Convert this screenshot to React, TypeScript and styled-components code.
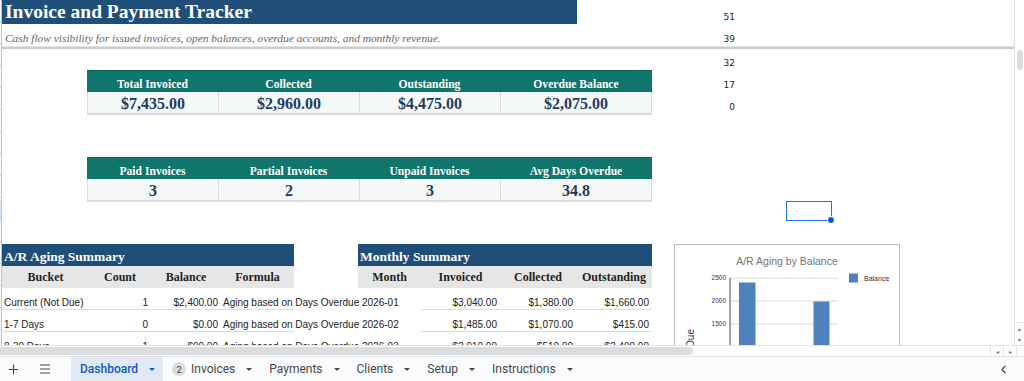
import React from "react";
import styled, { createGlobalStyle } from "styled-components";
import { Plus, Menu, ChevronLeft } from "lucide-react";

const SERIF = `"Liberation Serif", "DejaVu Serif", serif`;
const SANS = `"Liberation Sans", Arial, sans-serif`;
const UI = `Roboto, "Noto Sans", sans-serif`;

const GlobalStyle = createGlobalStyle`
  html, body {
    margin: 0;
    padding: 0;
    background: #ffffff;
  }
  body {
    width: 1024px;
    height: 381px;
    overflow: hidden;
  }
`;

const kpiTop = [
    { label: "Total Invoiced", value: "$7,435.00" },
    { label: "Collected", value: "$2,960.00" },
    { label: "Outstanding", value: "$4,475.00" },
    { label: "Overdue Balance", value: "$2,075.00" },
];

const kpiCounts = [
    { label: "Paid Invoices", value: "3" },
    { label: "Partial Invoices", value: "2" },
    { label: "Unpaid Invoices", value: "3" },
    { label: "Avg Days Overdue", value: "34.8" },
];

const aging = [
    ["Current (Not Due)", "1", "$2,400.00"],
    ["1-7 Days", "0", "$0.00"],
    ["8-30 Days", "1", "$90.00"],
];

const monthly = [
    ["2026-01", "$3,040.00", "$1,380.00", "$1,660.00"],
    ["2026-02", "$1,485.00", "$1,070.00", "$415.00"],
    ["2026-03", "$2,910.00", "$510.00", "$2,400.00"],
];

const helperNumbers = ["32", "17", "0"];

const tabs = [
    { name: "Dashboard", active: true },
    { name: "Invoices", badge: "2" },
    { name: "Payments" },
    { name: "Clients" },
    { name: "Setup" },
    { name: "Instructions" },
];

export default function App() {
    return (
        <Window>
            <GlobalStyle />
            <SheetArea>
                <RowHeaders>
                    <RowSelected />
                </RowHeaders>
                <Grid>
                    <FrozenRow $h={24}>
                        <TitleCell>Invoice and Payment Tracker</TitleCell>
                        <NumCell $w={158}>51</NumCell>
                    </FrozenRow>
                    <FrozenRow $h={22}>
                        <Subtitle>
                            Cash flow visibility for issued invoices, open balances, overdue accounts, and monthly revenue.
                        </Subtitle>
                        <NumCell $w={158}>39</NumCell>
                    </FrozenRow>
                    <FreezeLine />

                    <UpperArea>
                        <KpiBlock>
                            <KpiTable $gap={21}>
                                {kpiTop.map((k) => (
                                    <KpiHead key={k.label}>{k.label}</KpiHead>
                                ))}
                                {kpiTop.map((k) => (
                                    <KpiValue key={k.label}>{k.value}</KpiValue>
                                ))}
                            </KpiTable>
                            <KpiTable $gap={43}>
                                {kpiCounts.map((k) => (
                                    <KpiHead key={k.label}>{k.label}</KpiHead>
                                ))}
                                {kpiCounts.map((k) => (
                                    <KpiValue key={k.label}>{k.value}</KpiValue>
                                ))}
                            </KpiTable>
                        </KpiBlock>
                        <HelperColumn>
                            {helperNumbers.map((n) => (
                                <HelperNum key={n}>{n}</HelperNum>
                            ))}
                        </HelperColumn>
                        <SelectionSlot>
                            <SelectedCell>
                                <FillHandle />
                            </SelectedCell>
                        </SelectionSlot>
                    </UpperArea>

                    <LowerArea>
                        <Section $w={292}>
                            <SectionTitle>A/R Aging Summary</SectionTitle>
                            <TableRow $cols="87px 62px 70px 73px" $head>
                                <HeadCell>Bucket</HeadCell>
                                <HeadCell>Count</HeadCell>
                                <HeadCell>Balance</HeadCell>
                                <HeadCell>Formula</HeadCell>
                            </TableRow>
                            {aging.map((r) => (
                                <TableRow key={r[0]} $cols="87px 62px 70px 73px">
                                    <DataCell $line>{r[0]}</DataCell>
                                    <DataCell $line $right>{r[1]}</DataCell>
                                    <DataCell $line $right>{r[2]}</DataCell>
                                    <DataCell $line $overflow>Aging based on Days Overdue</DataCell>
                                </TableRow>
                            ))}
                        </Section>
                        <Section $w={294} $ml={64}>
                            <SectionTitle>Monthly Summary</SectionTitle>
                            <TableRow $cols="63px 79px 76px 76px" $head>
                                <HeadCell>Month</HeadCell>
                                <HeadCell>Invoiced</HeadCell>
                                <HeadCell>Collected</HeadCell>
                                <HeadCell>Outstanding</HeadCell>
                            </TableRow>
                            {monthly.map((r) => (
                                <TableRow key={r[0]} $cols="63px 79px 76px 76px">
                                    <DataCell $pad={4}>{r[0]}</DataCell>
                                    <DataCell $line $right>{r[1]}</DataCell>
                                    <DataCell $line $right>{r[2]}</DataCell>
                                    <DataCell $line $right>{r[3]}</DataCell>
                                </TableRow>
                            ))}
                        </Section>
                        <ChartCard>
                            <AgingChart />
                        </ChartCard>
                    </LowerArea>
                </Grid>
                <VScroll>
                    <VThumb />
                    <VArrows>
                        <ScrollArrow>▴</ScrollArrow>
                        <ScrollArrow>▾</ScrollArrow>
                    </VArrows>
                </VScroll>
            </SheetArea>

            <HScroll>
                <HThumb />
                <HArrowBox>◂</HArrowBox>
                <HArrowBox>▸</HArrowBox>
                <HCorner />
            </HScroll>

            <TabBar>
                <IconButton>
                    <Plus size={15} strokeWidth={1.8} />
                </IconButton>
                <IconButton>
                    <Menu size={14} strokeWidth={1.8} />
                </IconButton>
                <Tabs>
                    {tabs.map((t) => (
                        <Tab key={t.name} $active={!!t.active}>
                            {t.badge && <Badge>{t.badge}</Badge>}
                            <span>{t.name}</span>
                            <Caret />
                        </Tab>
                    ))}
                </Tabs>
                <Collapse>
                    <ChevronLeft size={13} strokeWidth={2} />
                </Collapse>
            </TabBar>
        </Window>
    );
}

const AgingChart = () => {
    const grid = [
        { y: 33, label: "2500" },
        { y: 56, label: "2000" },
        { y: 79, label: "1500" },
    ];
    return (
        <svg width="224" height="110" viewBox="0 0 224 110">
            <text x="112" y="20" textAnchor="middle" fontSize="10.5" fill="#757575" fontFamily="Liberation Sans, Arial, sans-serif">
                A/R Aging by Balance
            </text>
            {grid.map((g) => (
                <g key={g.label}>
                    <line x1="55" x2="163" y1={g.y} y2={g.y} stroke="#d9d9d9" strokeWidth="1" />
                    <text x="51" y={g.y + 2} textAnchor="end" fontSize="6.5" fill="#333" fontFamily="Liberation Sans, Arial, sans-serif">
                        {g.label}
                    </text>
                </g>
            ))}
            <line x1="55" x2="55" y1="33" y2="110" stroke="#444" strokeWidth="1" />
            <rect x="64" y="37.5" width="16.5" height="80" fill="#4f81bd" />
            <rect x="138.5" y="56.5" width="16" height="60" fill="#4f81bd" />
            <rect x="174" y="28.5" width="9" height="9" fill="#4f81bd" />
            <text x="189" y="35.5" fontSize="7" fill="#333" fontFamily="Liberation Sans, Arial, sans-serif">
                Balance
            </text>
            <text
                x="19"
                y="84"
                textAnchor="end"
                fontSize="10"
                fill="#333"
                fontFamily="Liberation Sans, Arial, sans-serif"
                transform="rotate(-90 19 84)"
            >
                Balance Due
            </text>
        </svg>
    );
};

const Window = styled.div`
    width: 1024px;
    height: 381px;
    display: flex;
    flex-direction: column;
    overflow: hidden;
    background: #ffffff;
`;

const SheetArea = styled.div`
    height: 345px;
    display: flex;
    overflow: hidden;
`;

const RowHeaders = styled.div`
    width: 1px;
    flex: none;
    border-right: 1px solid #c4c7c5;
    background: repeating-linear-gradient(to bottom, #f8f9fa 0 21px, #c4c7c5 21px 22px);
    padding-top: 201px;
`;

const RowSelected = styled.div`
    height: 21px;
    background: #d3e3fd;
`;

const Grid = styled.div`
    flex: 1;
    display: flex;
    flex-direction: column;
    overflow: hidden;
`;

const FrozenRow = styled.div<{ $h: number }>`
    height: ${(p) => p.$h}px;
    display: flex;
    flex: none;
`;

const TitleCell = styled.div`
    width: 572px;
    padding-left: 3px;
    background: #1f4e79;
    color: #ffffff;
    font-family: ${SERIF};
    font-weight: 700;
    font-size: 19.5px;
    line-height: 24px;
    white-space: nowrap;
`;

const Subtitle = styled.div`
    width: 572px;
    padding-left: 3px;
    display: flex;
    align-items: flex-end;
    padding-bottom: 2px;
    color: #666666;
    font-family: ${SERIF};
    font-style: italic;
    font-size: 11.4px;
    white-space: nowrap;
`;

const NumCell = styled.div<{ $w: number }>`
    width: ${(p) => p.$w}px;
    display: flex;
    align-items: flex-end;
    justify-content: flex-end;
    padding-bottom: 2px;
    box-sizing: border-box;
    font-family: "DejaVu Sans", Verdana, sans-serif;
    font-size: 9px;
    color: #222222;
`;

const FreezeLine = styled.div`
    height: 2px;
    flex: none;
    border-top: 1px solid #e4e4e4;
    background: #cbcbcb;
`;

const UpperArea = styled.div`
    height: 195px;
    display: flex;
    flex: none;
`;

const KpiBlock = styled.div`
    width: 650px;
    padding-left: 85px;
    box-sizing: border-box;
    display: flex;
    flex-direction: column;
`;

const KpiTable = styled.div<{ $gap: number }>`
    margin-top: ${(p) => p.$gap}px;
    display: grid;
    grid-template-columns: 131px 141px 141px 152px;
    grid-template-rows: 22px 22px;
    box-shadow: 0 1px 0 #d9d9d9;
`;

const KpiHead = styled.div`
    background: #10756a;
    color: #ffffff;
    font-family: ${SERIF};
    font-weight: 700;
    font-size: 11.6px;
    display: flex;
    align-items: flex-end;
    justify-content: center;
    padding-bottom: 1px;
    border-top: 1px solid #0c6157;
`;

const KpiValue = styled.div`
    background: #f4f8f9;
    color: #1f3b63;
    font-family: ${SERIF};
    font-weight: 700;
    font-size: 16px;
    line-height: 18px;
    display: flex;
    align-items: flex-end;
    justify-content: center;
    border-left: 1px solid #d9d9d9;
    border-bottom: 1px solid #d9d9d9;
    &:last-child {
        border-right: 1px solid #d9d9d9;
    }
`;

const HelperColumn = styled.div`
    width: 83px;
    padding-top: 3px;
    display: flex;
    flex-direction: column;
`;

const HelperNum = styled.div`
    height: 22px;
    line-height: 22px;
    text-align: right;
    font-family: "DejaVu Sans", Verdana, sans-serif;
    font-size: 9px;
    color: #222222;
`;

const SelectionSlot = styled.div`
    margin-left: 51px;
    padding-top: 152px;
`;

const SelectedCell = styled.div`
    position: relative;
    width: 44px;
    height: 18px;
    border: 1.5px solid #1a73e8;
`;

const FillHandle = styled.div`
    position: absolute;
    right: -4px;
    bottom: -4px;
    width: 6px;
    height: 6px;
    border-radius: 50%;
    background: #0b57d0;
    border: 1px solid #ffffff;
`;

const LowerArea = styled.div`
    display: flex;
    align-items: flex-start;
    flex: none;
`;

const Section = styled.div<{ $w: number; $ml?: number }>`
    width: ${(p) => p.$w}px;
    margin-left: ${(p) => p.$ml ?? 0}px;
    display: flex;
    flex-direction: column;
`;

const SectionTitle = styled.div`
    height: 22px;
    background: #1f4e79;
    color: #ffffff;
    font-family: ${SERIF};
    font-weight: 700;
    font-size: 13.5px;
    display: flex;
    align-items: flex-end;
    padding-left: 2px;
    padding-bottom: 1px;
    box-sizing: border-box;
    white-space: nowrap;
`;

const TableRow = styled.div<{ $cols: string; $head?: boolean }>`
    display: grid;
    grid-template-columns: ${(p) => p.$cols};
    height: 22px;
    background: ${(p) => (p.$head ? "#e6e6e6" : "transparent")};
`;

const HeadCell = styled.div`
    display: flex;
    align-items: center;
    justify-content: center;
    padding-top: 1px;
    font-family: ${SERIF};
    font-weight: 700;
    font-size: 12px;
    color: #1f1f1f;
`;

const DataCell = styled.div<{ $right?: boolean; $line?: boolean; $overflow?: boolean; $pad?: number }>`
    display: flex;
    align-items: flex-end;
    justify-content: ${(p) => (p.$right ? "flex-end" : "flex-start")};
    padding: 0 ${(p) => (p.$right ? 3 : 0)}px 1px ${(p) => p.$pad ?? (p.$right ? 0 : 2)}px;
    border-bottom: ${(p) => (p.$line ? "1px solid #dcdcdc" : "1px solid transparent")};
    font-family: ${SANS};
    font-size: 10px;
    color: #222222;
    white-space: nowrap;
    overflow: ${(p) => (p.$overflow ? "visible" : "hidden")};
`;

const ChartCard = styled.div`
    margin-left: 22px;
    width: 224px;
    height: 110px;
    border: 1px solid #bdbdbd;
    background: #ffffff;
    overflow: hidden;
`;

const VScroll = styled.div`
    width: 9px;
    flex: none;
    border-left: 1px solid #e3e3e3;
    display: flex;
    flex-direction: column;
    align-items: center;
`;

const VThumb = styled.div`
    margin-top: 50px;
    width: 6px;
    height: 20px;
    border-radius: 3px;
    background: #dadce0;
`;

const VArrows = styled.div`
    margin-top: auto;
    width: 100%;
    display: flex;
    flex-direction: column;
    border-top: 1px solid #e3e3e3;
`;

const ScrollArrow = styled.div`
    height: 11px;
    font-size: 6px;
    color: #777777;
    display: flex;
    align-items: center;
    justify-content: center;
    font-family: ${SANS};
`;

const HScroll = styled.div`
    height: 10px;
    flex: none;
    display: flex;
    align-items: center;
    border-top: 1px solid #e3e3e3;
    border-bottom: 1px solid #e3e3e3;
    background: #ffffff;
`;

const HThumb = styled.div`
    width: 693px;
    height: 8px;
    border-radius: 0 4px 4px 0;
    background: #dadce0;
    margin-right: auto;
`;

const HArrowBox = styled.div`
    width: 12px;
    height: 10px;
    border-left: 1px solid #e3e3e3;
    font-size: 6px;
    color: #777777;
    display: flex;
    align-items: center;
    justify-content: center;
    font-family: ${SANS};
`;

const HCorner = styled.div`
    width: 7px;
    height: 10px;
    border-left: 1px solid #e3e3e3;
`;

const TabBar = styled.div`
    flex: 1;
    display: flex;
    align-items: stretch;
    background: #f9fbfd;
    padding-left: 5px;
    font-family: ${UI};
`;

const IconButton = styled.div`
    width: 17px;
    margin-right: 14px;
    display: flex;
    align-items: center;
    justify-content: center;
    color: #444746;
`;

const Tabs = styled.div`
    display: flex;
    align-items: stretch;
    margin-left: 4px;
`;

const Tab = styled.div<{ $active: boolean }>`
    display: flex;
    align-items: center;
    padding: 0 8px 0 9px;
    background: ${(p) => (p.$active ? "#e1e9f7" : "transparent")};
    color: ${(p) => (p.$active ? "#0b57d0" : "#444746")};
    font-size: 12px;
    font-weight: ${(p) => (p.$active ? 500 : 400)};
    white-space: nowrap;
`;

const Caret = styled.span`
    margin-left: 11px;
    width: 0;
    height: 0;
    border-left: 3px solid transparent;
    border-right: 3px solid transparent;
    border-top: 3.5px solid currentColor;
`;

const Badge = styled.span`
    width: 14px;
    height: 14px;
    border-radius: 50%;
    background: #dadce0;
    color: #444746;
    font-size: 9.5px;
    display: inline-flex;
    align-items: center;
    justify-content: center;
    margin-right: 5px;
`;

const Collapse = styled.div`
    margin-left: auto;
    width: 42px;
    display: flex;
    align-items: center;
    justify-content: center;
    color: #444746;
`;
